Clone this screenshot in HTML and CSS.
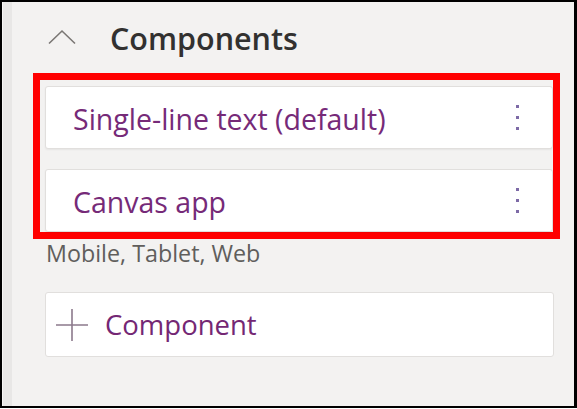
FILE: index.html
```html
<!DOCTYPE html>
<html>
<head>
<meta charset="utf-8">
<link rel="stylesheet" href="styles.css">
</head>
<body>
<div class="frame">
  <div class="strip"></div>
  <div class="content">
    <div class="header">
      <svg class="chevron" width="28" height="16" viewBox="0 0 28 16"><path d="M1 14.5 L14 2 L27 14.5" fill="none" stroke="#7a7774" stroke-width="1.6"/></svg>
      <span class="title">Components</span>
    </div>
    <div class="highlight">
      <div class="card">
        <span class="card-text">Single-line text (default)</span>
        <span class="kebab"><i></i><i></i><i></i></span>
      </div>
      <div class="card">
        <span class="card-text">Canvas app</span>
        <span class="kebab"><i></i><i></i><i></i></span>
      </div>
    </div>
    <div class="sub">Mobile, Tablet, Web</div>
    <div class="add">
      <svg class="plus" width="34" height="34" viewBox="0 0 34 34"><path d="M17 1 V33 M1 17 H33" fill="none" stroke="#8c7a8c" stroke-width="1.6"/></svg>
      <span class="add-text">Component</span>
    </div>
  </div>
</div>
</body>
</html>
```
FILE: styles.css
```css
html, body {
  margin: 0;
  padding: 0;
  background: #ffffff;
}
.frame {
  width: 577px;
  height: 408px;
  box-sizing: border-box;
  border: 2px solid #000;
  border-right-width: 3px;
  background: #f3f2f1;
  display: flex;
  font-family: "Open Sans", "Noto Sans", sans-serif;
}
.strip {
  width: 10px;
  background: #e8e7e6;
  border-left: 1px solid #f6f5f4;
  box-sizing: border-box;
}
.content {
  flex: 1;
  display: flex;
  flex-direction: column;
}
.header {
  height: 71px;
  display: flex;
  align-items: center;
  padding-left: 36px;
}
.chevron {
  display: block;
  margin-top: -2px;
}
.title {
  margin-left: 34px;
  font-size: 30.5px;
  font-weight: 600;
  color: #323130;
}
.highlight {
  margin-left: 21px;
  width: 527px;
  box-sizing: border-box;
  border: 7px solid #ff0000;
  padding: 6px 0 0 5px;
  display: flex;
  flex-direction: column;
  gap: 20px;
}
.card {
  height: 63px;
  box-sizing: border-box;
  background: #fff;
  border: 1px solid #e1dfdd;
  border-radius: 3px;
  box-shadow: 0 1px 2px rgba(0,0,0,0.06);
  display: flex;
  align-items: center;
  padding-left: 27px;
  padding-right: 33px;
  padding-top: 3px;
}
.card-text {
  flex: 1;
  font-size: 28.5px;
  color: #762a78;
}
.kebab {
  display: flex;
  flex-direction: column;
  gap: 8px;
  margin-top: -3px;
}
.kebab i {
  display: block;
  width: 3px;
  height: 3px;
  background: #7d6aa6;
}
.sub {
  margin-left: 34px;
  margin-top: 3px;
  font-size: 23.3px;
  color: #605e5c;
  line-height: 22px;
}
.add {
  margin-left: 33px;
  margin-top: 28px;
  width: 509px;
  height: 65px;
  box-sizing: border-box;
  background: #fff;
  border: 1px solid #e1dfdd;
  border-radius: 3px;
  display: flex;
  align-items: center;
  padding-left: 9px;
}
.plus {
  display: block;
}
.add-text {
  margin-left: 16px;
  font-size: 27.5px;
  font-weight: 500;
  color: #742774;
}
```
